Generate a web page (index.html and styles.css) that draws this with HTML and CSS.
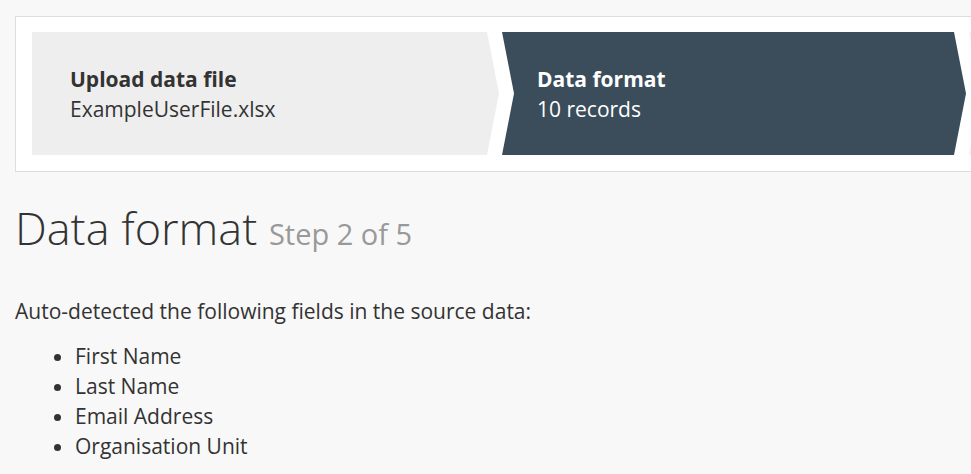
FILE: index.html
```
<!DOCTYPE html>
<html lang="en">
<head>
<meta charset="utf-8">
<title>Data format</title>
<link rel="stylesheet" href="styles.css">
</head>
<body>
<div class="wizard">
  <div class="steps">
    <div class="step step-done step-first">
      <div class="step-title">Upload data file</div>
      <div class="step-sub">ExampleUserFile.xlsx</div>
    </div>
    <div class="step step-active">
      <div class="step-title">Data format</div>
      <div class="step-sub">10 records</div>
    </div>
    <div class="step step-todo"></div>
    <div class="step step-todo"></div>
  </div>
</div>
<h1 class="page-title">Data format <small class="page-step">Step 2 of 5</small></h1>
<p class="intro">Auto-detected the following fields in the source data:</p>
<ul class="fields">
  <li>First Name</li>
  <li>Last Name</li>
  <li>Email Address</li>
  <li>Organisation Unit</li>
</ul>
</body>
</html>
```
FILE: styles.css
```
html {
  overflow: hidden;
}
body {
  margin: 0;
  padding: 16px 15px 0 15px;
  background: #f8f8f8;
  color: #333;
  font-family: "Open Sans", "Noto Sans", sans-serif;
  font-size: 21px;
  line-height: 30px;
}
.wizard {
  background: #fff;
  border: 1px solid #ddd;
  margin-right: -600px;
  padding: 15px 0 16px 16px;
  overflow: hidden;
}
.steps {
  display: flex;
  gap: 3px;
}
.step {
  flex: 0 0 464px;
  height: 123px;
  box-sizing: border-box;
  padding: 32px 20px 0 35px;
  clip-path: polygon(0 0, calc(100% - 12px) 0, 100% 50%, calc(100% - 12px) 100%, 0 100%, 12px 50%);
}
.step-first {
  flex-basis: 467px;
  padding-left: 38px;
  clip-path: polygon(0 0, calc(100% - 12px) 0, 100% 50%, calc(100% - 12px) 100%, 0 100%);
}
.step-done {
  background: #eee;
}
.step-active {
  background: #3b4d5b;
  color: #fff;
}
.step-todo {
  background: #f3f3f3;
}
.step-title {
  font-weight: 700;
}
.page-title {
  margin: 31px 0 0 0;
  font-size: 45px;
  font-weight: 300;
  line-height: 1.1;
}
.page-step {
  font-size: 29px;
  font-weight: 400;
  color: #999;
}
.intro {
  margin: 43px 0 0 0;
}
.fields {
  margin: 15px 0 0 0;
  padding-left: 60px;
}
```
